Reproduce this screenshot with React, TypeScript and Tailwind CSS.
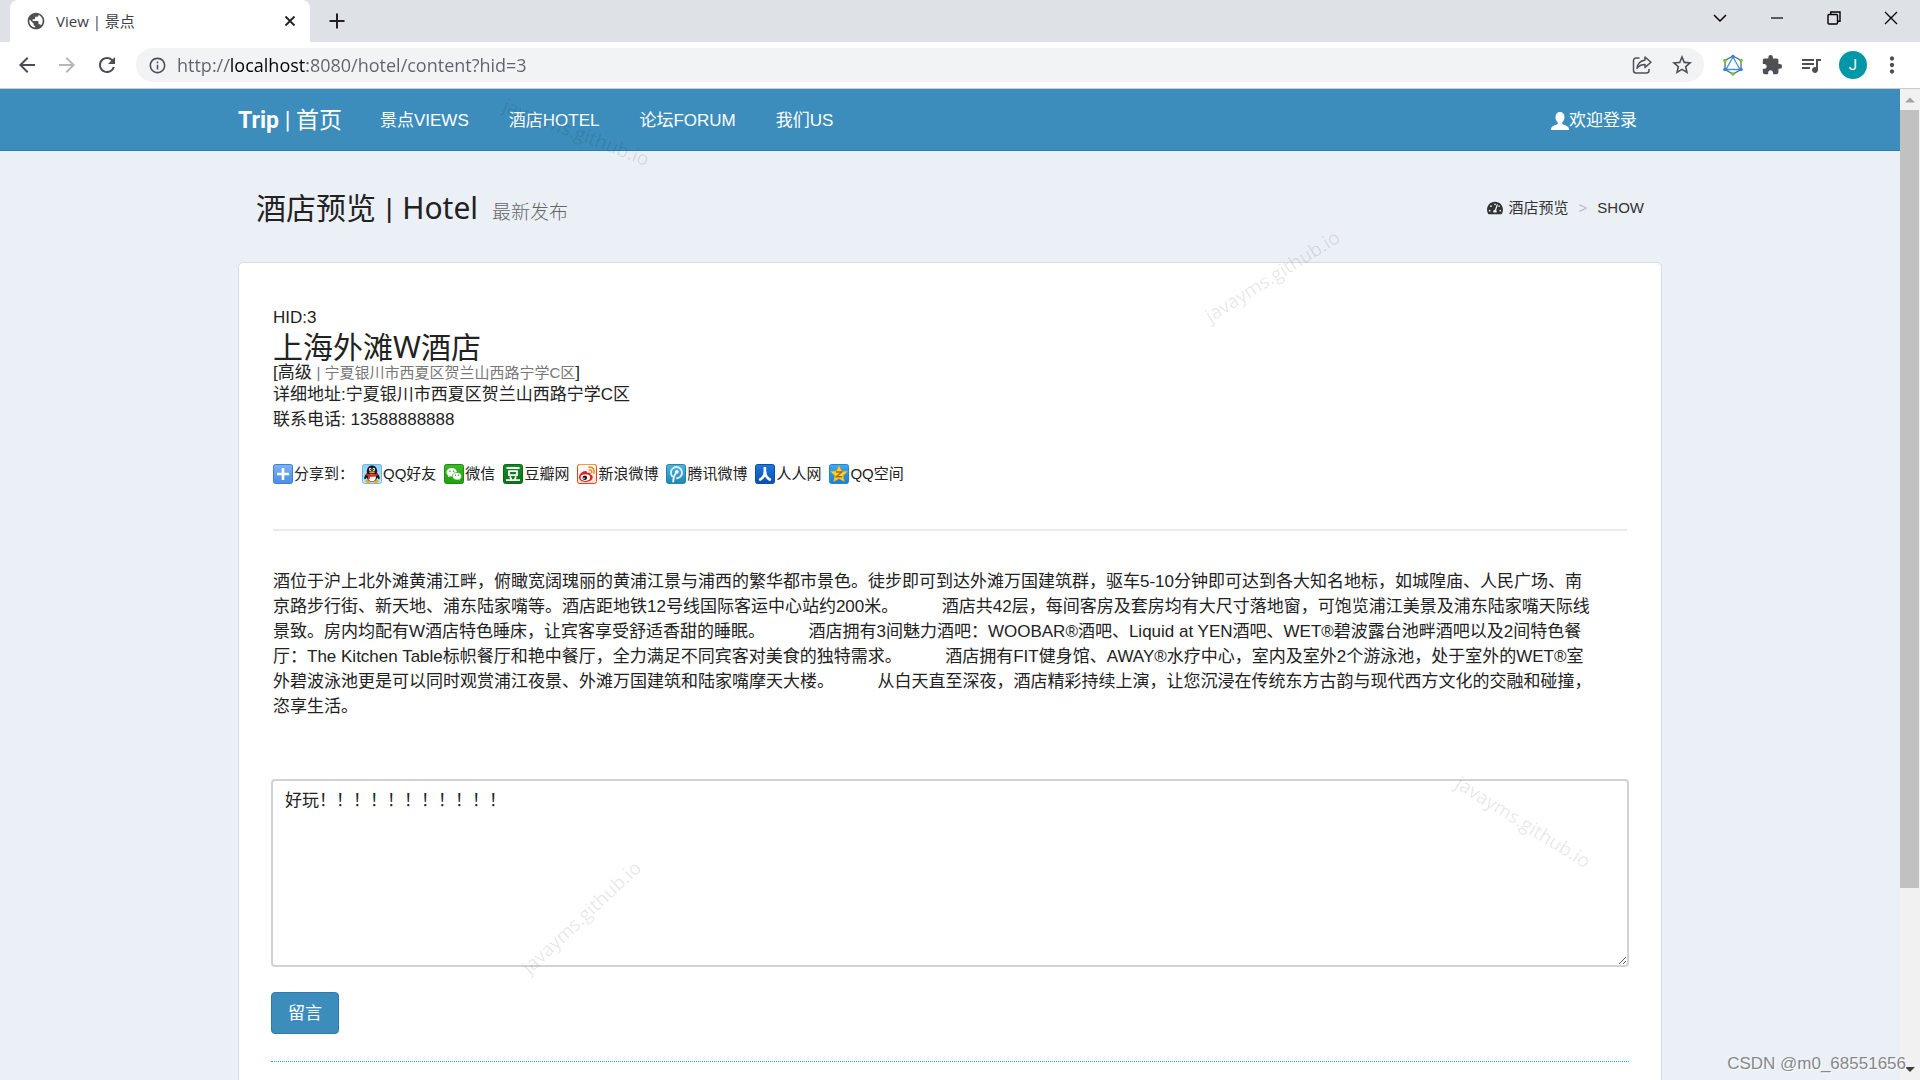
import { Fragment, type ReactNode } from "react";
import {
  MdArrowBack,
  MdArrowForward,
  MdExtension,
  MdInfoOutline,
  MdMoreVert,
  MdPublic,
  MdQueueMusic,
  MdRefresh,
  MdStarBorder,
} from "react-icons/md";
import { FaTachometerAlt } from "react-icons/fa";

const navLinks = ["景点VIEWS", "酒店HOTEL", "论坛FORUM", "我们US"];

const description = [
  "酒位于沪上北外滩黄浦江畔，俯瞰宽阔瑰丽的黄浦江景与浦西的繁华都市景色。徒步即可到达外滩万国建筑群，驱车5-10分钟即可达到各大知名地标，如城隍庙、人民广场、南",
  "京路步行街、新天地、浦东陆家嘴等。酒店距地铁12号线国际客运中心站约200米。\u00a0\u00a0\u3000\u3000酒店共42层，每间客房及套房均有大尺寸落地窗，可饱览浦江美景及浦东陆家嘴天际线",
  "景致。房内均配有W酒店特色睡床，让宾客享受舒适香甜的睡眠。\u00a0\u00a0\u3000\u3000酒店拥有3间魅力酒吧：WOOBAR®酒吧、Liquid at YEN酒吧、WET®碧波露台池畔酒吧以及2间特色餐",
  "厅：The Kitchen Table标帜餐厅和艳中餐厅，全力满足不同宾客对美食的独特需求。\u00a0\u00a0\u3000\u3000酒店拥有FIT健身馆、AWAY®水疗中心，室内及室外2个游泳池，处于室外的WET®室",
  "外碧波泳池更是可以同时观赏浦江夜景、外滩万国建筑和陆家嘴摩天大楼。\u00a0\u00a0\u3000\u3000从白天直至深夜，酒店精彩持续上演，让您沉浸在传统东方古韵与现代西方文化的交融和碰撞，",
  "恣享生活。",
];

function Tile({ from, to, edge, children }: { from: string; to: string; edge: string; children: ReactNode }) {
  const id = `tile-${edge.slice(1)}`;
  return (
    <svg viewBox="0 0 20 20" className="size-5 shrink-0" aria-hidden="true">
      <defs>
        <linearGradient id={id} x1="0" y1="0" x2="0" y2="1">
          <stop offset="0" stopColor={from} />
          <stop offset="1" stopColor={to} />
        </linearGradient>
      </defs>
      <rect x=".5" y=".5" width="19" height="19" rx="2" fill={`url(#${id})`} stroke={edge} />
      {children}
    </svg>
  );
}

const shares = [
  {
    label: "分享到：",
    icon: (
      <Tile from="#7db4f5" to="#4a8de6" edge="#3f7fd6">
        <path d="M10 4v12M4 10h12" stroke="#fff" strokeWidth="2.6" />
      </Tile>
    ),
  },
  {
    label: "QQ好友",
    icon: (
      <Tile from="#8fd0f7" to="#c5e8fb" edge="#6db8ea">
        <ellipse cx="6.4" cy="17.2" rx="3" ry="1.6" fill="#f5a21c" />
        <ellipse cx="13.6" cy="17.2" rx="3" ry="1.6" fill="#f5a21c" />
        <path d="M5 9C2.5 11 1.700 14 2.600 15.200c.9.2 1.600-1 2.200-1.800.6 2.400 2.600 4 5.200 4s4.600-1.600 5.200-4c.6.8 1.300 2 2.200 1.800.9-1.200.1-4.200-2.400-6.200z" fill="#16181c" />
        <ellipse cx="10" cy="13.400" rx="3.900" ry="3.700" fill="#fff" />
        <path d="M4.800 8C4.800 4 6.800 1.500 10 1.500S15.200 4 15.200 8c0 1.500-2.300 2.500-5.200 2.500S4.800 9.500 4.800 8z" fill="#16181c" />
        <ellipse cx="8.200" cy="5.400" rx="1.200" ry="1.700" fill="#fff" />
        <ellipse cx="11.800" cy="5.400" rx="1.200" ry="1.700" fill="#fff" />
        <circle cx="8.500" cy="5.600" r=".6" fill="#111" />
        <circle cx="11.500" cy="5.600" r=".6" fill="#111" />
        <ellipse cx="10" cy="8.200" rx="3" ry="1" fill="#f5a21c" />
        <path d="M4.500 9.300c3.400 1.800 7.600 1.800 11 0l.5 1.900c-2 1.200-4 1.600-6 1.600l-2-.1-.2 2.300-1.800-.3.200-2.500-2.200-1z" fill="#e2231a" />
      </Tile>
    ),
  },
  {
    label: "微信",
    icon: (
      <Tile from="#3cba2b" to="#22a012" edge="#189008">
        <path d="M7.700 4C4.800 4 2.500 5.900 2.500 8.300c0 1.300.7 2.500 1.900 3.300L4 13.300l1.900-1c.6.2 1.200.2 1.800.2 2.900 0 5.200-1.900 5.200-4.200S10.600 4 7.700 4z" fill="#fff" />
        <circle cx="6" cy="7.200" r=".8" fill="#2aa81a" />
        <circle cx="9.500" cy="7.200" r=".8" fill="#2aa81a" />
        <path d="M13 8.400c-2.600 0-4.600 1.700-4.600 3.800s2 3.800 4.600 3.800c.5 0 1 0 1.500-.2l1.700.9-.4-1.500c1.100-.7 1.800-1.800 1.800-3 0-2.100-2-3.800-4.600-3.800z" fill="#fff" stroke="#2aa81a" strokeWidth=".7" />
        <circle cx="11.500" cy="11.200" r=".7" fill="#2aa81a" />
        <circle cx="14.500" cy="11.200" r=".7" fill="#2aa81a" />
      </Tile>
    ),
  },
  {
    label: "豆瓣网",
    icon: (
      <Tile from="#168a26" to="#0a7517" edge="#066a12">
        <path d="M3.500 4h13M6 7.200h8v4H6zM7 12.300l1.200 3M13 12.300l-1.200 3M3 16.200h14" fill="none" stroke="#fff" strokeWidth="1.800" />
      </Tile>
    ),
  },
  {
    label: "新浪微博",
    icon: (
      <Tile from="#fff" to="#f8dfd5" edge="#e2431f">
        <path d="M.5 2.500a2 2 0 0 1 2-2h15a2 2 0 0 1 2 2" fill="none" stroke="#f59a2c" />
        <path d="M8.500 7C5.500 7 2 10.300 2 13.300 2 16.200 5.200 18 8.700 18c4.200 0 7-2.400 7-4.700 0-1.400-1-2.200-2.200-2.500.5-1.300-.2-2.300-2.100-2-.6 0-1.300.3-1.300.3C10.500 7.700 9.700 7 8.500 7z" fill="#df1f1a" />
        <ellipse cx="8.400" cy="13.600" rx="4.800" ry="3.300" fill="#fff" />
        <circle cx="7.800" cy="13.800" r="2.300" fill="#17181a" />
        <circle cx="7" cy="14.200" r=".8" fill="#fff" />
        <path d="M12 3.200c3.500-.5 6 2.300 5 5.800M12.200 6c1.800-.3 2.900.9 2.400 2.600" fill="none" stroke="#f08a1c" strokeWidth="1.600" strokeLinecap="round" />
      </Tile>
    ),
  },
  {
    label: "腾讯微博",
    icon: (
      <Tile from="#4fb4dc" to="#1f85b5" edge="#2585ae">
        <path d="M6.200 12.300A5.600 5.600 0 1 1 11 14.200" fill="none" stroke="#d8f0fa" strokeWidth="1.900" strokeLinecap="round" />
        <circle cx="10.800" cy="7.800" r="1.900" fill="#eef9fd" />
        <path d="M10.300 8.500C8.300 10.800 7.300 13.600 7.200 17.500" fill="none" stroke="#eef9fd" strokeWidth="1.900" strokeLinecap="round" />
      </Tile>
    ),
  },
  {
    label: "人人网",
    icon: (
      <Tile from="#1f78dc" to="#0a4fae" edge="#0b4ea6">
        <path d="M9.900 3v4.500c0 4-2 6.800-5.700 8.700M10.100 7.500c0 4 2 6.800 5.700 8.700" fill="none" stroke="#fff" strokeWidth="2.600" />
      </Tile>
    ),
  },
  {
    label: "QQ空间",
    icon: (
      <Tile from="#3fa9f2" to="#1a7fd4" edge="#2285d6">
        <path d="M10 1.500l2.500 5.400 6 .7-4.400 4 1.200 5.900L10 14.600l-5.300 2.900 1.200-5.900-4.400-4 6-.7z" fill="#fdd32e" stroke="#e9a410" strokeWidth=".6" />
        <path d="M7 8h5.800L7.300 12.800h5.900" fill="none" stroke="#a8690a" strokeWidth="1.400" />
      </Tile>
    ),
  },
];

function BrowserChrome() {
  return (
    <header className="shrink-0 font-['Open_Sans','Noto_Sans_CJK_SC',sans-serif] text-[#3c4043]">
      <div className="flex h-[42px] justify-between bg-[#dee1e6] pr-px pl-[10px]">
        <div className="flex">
          <div className="flex w-[300px] items-center gap-[10px] rounded-t-lg bg-white pr-3 pl-4">
            <MdPublic className="size-[20px] text-[#4d5156]" />
            <span className="grow text-[15px]">View | 景点</span>
            <button type="button" aria-label="Close tab">
              <svg viewBox="0 0 16 16" className="size-4" fill="none" stroke="#202124" strokeWidth="1.800">
                <path d="M3.500 3.500l9 9M12.500 3.500l-9 9" />
              </svg>
            </button>
          </div>
          <button type="button" aria-label="New tab" className="px-[18px]">
            <svg viewBox="0 0 18 18" className="size-[18px]" fill="none" stroke="#202124" strokeWidth="2">
              <path d="M9 1.500v15M1.500 9h15" />
            </svg>
          </button>
        </div>
        <div className="flex h-9 text-black">
          <button type="button" aria-label="Search tabs" className="flex w-[57px] items-center justify-center">
            <svg viewBox="0 0 14 14" className="size-[14px]" fill="none" stroke="currentColor" strokeWidth="1.500">
              <path d="M1 4l6 6 6-6" />
            </svg>
          </button>
          <button type="button" aria-label="Minimize" className="flex w-[57px] items-center justify-center">
            <svg viewBox="0 0 14 14" className="size-[14px]" stroke="currentColor" strokeWidth="1.200">
              <path d="M1 7h12" />
            </svg>
          </button>
          <button type="button" aria-label="Restore" className="flex w-[57px] items-center justify-center">
            <svg viewBox="0 0 14 14" className="size-[14px]" fill="none" stroke="currentColor" strokeWidth="1.400">
              <rect x="1" y="3.500" width="9.500" height="9.500" rx="1" />
              <path d="M3.800 3.500V1H13v9.200h-2.500" />
            </svg>
          </button>
          <button type="button" aria-label="Close" className="flex w-[57px] items-center justify-center">
            <svg viewBox="0 0 14 14" className="size-[14px]" fill="none" stroke="currentColor" strokeWidth="1.300">
              <path d="M1 1l12 12M13 1L1 13" />
            </svg>
          </button>
        </div>
      </div>

      <div className="flex h-[47px] items-center border-b border-[#c9cbce] bg-white pr-[19px] pl-[15px]">
        <div className="flex gap-4 text-2xl">
          <button type="button" aria-label="Back"><MdArrowBack className="text-[#4a4d51]" /></button>
          <button type="button" aria-label="Forward"><MdArrowForward className="text-[#b5b7ba]" /></button>
          <button type="button" aria-label="Reload"><MdRefresh className="text-[#4a4d51]" /></button>
        </div>
        <div className="ml-[17px] flex h-[34px] grow items-center rounded-full bg-[#f1f3f4] pr-[10px] pl-3">
          <MdInfoOutline className="size-[19px] text-[#4d5156]" />
          {/* the host part of the address is darker than the rest */}
          <input
            aria-label="Address"
            defaultValue="http://localhost:8080/hotel/content?hid=3"
            className="ml-[10px] h-full min-w-0 grow bg-[linear-gradient(90deg,#5f6368_52px,#000_52px,#000_130px,#5f6368_130px)] bg-clip-text text-[18px] text-transparent outline-none"
          />
          <div className="flex gap-4 text-[#4d5156]">
            <button type="button" aria-label="Share">
              <svg viewBox="0 0 24 24" className="size-6" fill="none" stroke="currentColor" strokeWidth="1.500" strokeLinejoin="round">
                <path d="M9.500 5H6a2.500 2.500 0 0 0-2.500 2.500v10A2.500 2.500 0 0 0 6 20h10.500a2.500 2.500 0 0 0 2.500-2.500V16" />
                <path d="M15 4l6 5.200-6 5.200v-3c-3.500 0-6 1-8 4 .5-4.500 3.200-7.600 8-8.400z" />
              </svg>
            </button>
            <button type="button" aria-label="Bookmark"><MdStarBorder className="size-6" /></button>
          </div>
        </div>
        <div className="ml-[17px] flex items-center gap-4 text-[#4d5156]">
          <button type="button" aria-label="Extension">
            <svg viewBox="0 0 24 24" className="size-6" fill="none">
              <path d="M12 3l8 4.500v9L12 21l-8-4.500v-9z" stroke="#5a6a78" strokeWidth="1.300" />
              <path d="M12 4L5 16.500h14z" stroke="#3d8fe0" strokeWidth="1.300" />
              <g fill="#2f86dc">
                <circle cx="12" cy="3.500" r="1.800" />
                <circle cx="4" cy="16.500" r="1.800" />
                <circle cx="20" cy="16.500" r="1.800" />
              </g>
              <g fill="#6cc733">
                <circle cx="4" cy="7.500" r="1.800" />
                <circle cx="20" cy="7.500" r="1.800" />
                <circle cx="12" cy="21" r="1.800" />
              </g>
            </svg>
          </button>
          <button type="button" aria-label="Extensions"><MdExtension className="size-[22px]" /></button>
          <button type="button" aria-label="Media"><MdQueueMusic className="size-6" /></button>
          <button type="button" className="size-7 rounded-full bg-[#0097a7] font-['Roboto',sans-serif] text-[15px] text-white">J</button>
          <button type="button" aria-label="Menu" className="-mx-1"><MdMoreVert className="size-[26px]" /></button>
        </div>
      </div>
    </header>
  );
}

function SiteNav() {
  return (
    <nav className="border-b border-[#2a7cae] bg-[#3c8dbc] text-[17px] text-white">
      <div className="mx-auto flex h-[61px] max-w-[1462px] items-center px-[19px] pt-[2px]">
        <a href="#" className="mr-[18px] font-['Roboto','Noto_Sans_CJK_SC',sans-serif] text-[23px]">
          <b>Trip</b> | 首页
        </a>
        {navLinks.map((link) => (
          <a key={link} href="#" className="px-5">{link}</a>
        ))}
        <a href="#" className="ml-auto flex items-center pr-[25px]">
          <svg viewBox="0 0 18 18" className="size-[18px]" fill="currentColor" aria-hidden="true">
            <path d="M9 0C6.200 0 4.500 2 4.500 5c0 2.200.9 4.200 2.200 5.300v1.500c-.5 1-5.200 2-6.200 3.700-.4.700-.5 1.300-.5 2.500h18c0-1.200-.1-1.800-.5-2.500-1-1.700-5.700-2.700-6.200-3.700v-1.500c1.300-1.100 2.200-3.100 2.200-5.300C13.500 2 11.800 0 9 0z" />
          </svg>
          欢迎登录
        </a>
      </div>
    </nav>
  );
}

function Watermark({ className }: { className: string }) {
  return (
    <span
      aria-hidden="true"
      className={`pointer-events-none absolute font-['Open_Sans',sans-serif] text-[19px] leading-6 text-black/10 ${className}`}
    >
      javayms.github.io
    </span>
  );
}

function Scrollbar() {
  return (
    <div aria-hidden="true" className="flex w-5 shrink-0 flex-col bg-[#f1f1f1]">
      <svg viewBox="0 0 20 21" className="h-[21px] w-5 shrink-0"><path d="M5 13.500l5-5 5 5z" fill="#a3a3a3" /></svg>
      <div className="grow">
        <div className="mr-px h-[82%] bg-[#c1c1c1]" />
      </div>
      <svg viewBox="0 0 20 21" className="h-[21px] w-5 shrink-0"><path d="M5 8l5 5 5-5z" fill="#404040" /></svg>
    </div>
  );
}

export default function App() {
  return (
    <div className="relative flex h-screen flex-col overflow-hidden">
      <BrowserChrome />
      <div className="flex min-h-0 grow">
        <div className="min-w-0 grow overflow-hidden bg-[#ebeff6] font-['Liberation_Sans','Noto_Sans_CJK_SC',sans-serif] text-[17px] leading-[25px] text-[#222]">
          <SiteNav />
          <main className="mx-auto max-w-[1462px] px-[19px]">
            <div className="flex items-center justify-between px-[18px] pt-10 pb-[37px]">
              <h1 className="font-['Noto_Sans','Noto_Sans_CJK_SC',sans-serif] text-[30px] leading-[33px]">
                酒店预览<span className="mx-[2px] font-['Roboto',sans-serif]"> | </span>Hotel{" "}
                <small className="ml-[6px] text-[19px] leading-none font-light text-[#666]">最新发布</small>
              </h1>
              <ol className="flex items-center text-[15px] leading-5 text-[#333]">
                <li>
                  <a href="#" className="flex items-center gap-[6px]">
                    <FaTachometerAlt className="size-4" />
                    酒店预览
                  </a>
                </li>
                <li aria-hidden="true" className="px-[10px] text-[#bbb]">&gt;</li>
                <li>SHOW</li>
              </ol>
            </div>

            <section className="rounded-[5px] border border-[#d6dde1] bg-white px-8 pt-[42px] pb-24">
              <article className="px-[2px]">
                <p>HID:3</p>
                <h2 className="font-['Noto_Sans','Noto_Sans_CJK_SC',sans-serif] text-[30px] leading-[33px]">
                  上海外滩W酒店
                </h2>
                <p className="leading-[19px]">
                  [高级 <small className="text-[15px] text-[#777]">| 宁夏银川市西夏区贺兰山西路宁学C区</small>]
                </p>
                <p>详细地址:宁夏银川市西夏区贺兰山西路宁学C区</p>
                <p>联系电话: 13588888888</p>

                <ul className="mt-8 flex flex-wrap gap-2 text-[15px] leading-5">
                  {shares.map(({ label, icon }) => (
                    <li key={label}>
                      <a href="#" className="flex items-center gap-px">
                        {icon}
                        {label}
                      </a>
                    </li>
                  ))}
                </ul>

                <hr className="mt-[45px] border-t-2 border-[#ebebeb]" />

                <p className="mt-[38px]">
                  {description.map((line) => (
                    <Fragment key={line}>
                      {line}
                      <br />
                    </Fragment>
                  ))}
                </p>
              </article>

              <form className="mt-[60px]" onSubmit={(e) => e.preventDefault()}>
                <textarea
                  aria-label="留言内容"
                  defaultValue="好玩！！！！！！！！！！！"
                  className="block h-[188px] w-full resize-y rounded-[4px] border-2 border-[#d2d2d2] px-3 py-[7px] outline-none"
                />
                <button
                  type="submit"
                  className="mt-[25px] block h-[42px] rounded-[4px] border border-[#2a7cae] bg-[#3c8dbc] px-4 text-white"
                >
                  留言
                </button>
              </form>

              <hr className="mt-[27px] border-t border-dotted border-[#00b8f0]" />
            </section>
          </main>
        </div>
        <Scrollbar />
      </div>

      <Watermark className="top-[120px] left-[499px] rotate-[21deg]" />
      <Watermark className="top-[264px] left-[1195px] -rotate-[32deg]" />
      <Watermark className="top-[905px] left-[504px] -rotate-[43deg]" />
      <Watermark className="top-[810px] left-[1446px] rotate-[32deg]" />
      <span className="absolute right-[14px] bottom-1 font-['Liberation_Sans',sans-serif] text-[17px] leading-[25px] text-[#85888d] [text-shadow:1px_1px_0_#fff]">
        CSDN @m0_68551656
      </span>
    </div>
  );
}
